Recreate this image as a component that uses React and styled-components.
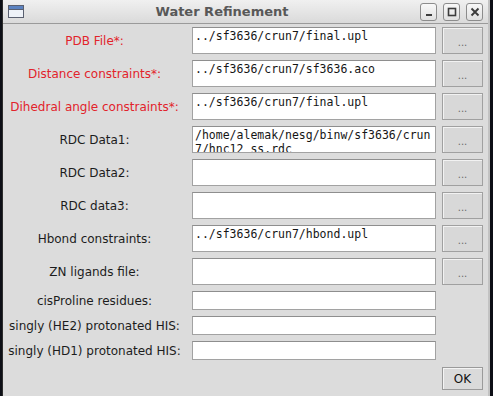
import React from "react";
import styled, { createGlobalStyle } from "styled-components";

const GlobalStyle = createGlobalStyle`
  body {
    margin: 0;
    background: #0d0f16;
    overflow: hidden;
  }
`;

const rows = [
  { label: "PDB File*:", required: true, value: "../sf3636/crun7/final.upl", browse: true },
  { label: "Distance constraints*:", required: true, value: "../sf3636/crun7/sf3636.aco", browse: true },
  { label: "Dihedral angle constraints*:", required: true, value: "../sf3636/crun7/final.upl", browse: true },
  { label: "RDC Data1:", value: "/home/alemak/nesg/binw/sf3636/crun7/hnc12_ss.rdc", browse: true },
  { label: "RDC Data2:", value: "", browse: true },
  { label: "RDC data3:", value: "", browse: true },
  { label: "Hbond constraints:", value: "../sf3636/crun7/hbond.upl", browse: true },
  { label: "ZN ligands file:", value: "", browse: true },
  { label: "cisProline residues:", value: "" },
  { label: "singly (HE2) protonated HIS:", value: "" },
  { label: "singly (HD1) protonated HIS:", value: "" },
];

function WindowIcon() {
  return (
    <svg width="16" height="13" viewBox="0 0 16 13">
      <rect x="0.5" y="0.5" width="15" height="12" fill="#eef2f8" stroke="#5a6070" />
      <rect x="1" y="1" width="14" height="3" fill="#5b82c0" />
      <line x1="1" y1="4.5" x2="15" y2="4.5" stroke="#5a6070" />
    </svg>
  );
}

function Window() {
  return (
    <Frame>
      <TitleBar>
        <WindowIcon />
        <Title>Water Refinement</Title>
        <Controls>
          <Ctrl>
            <svg width="10" height="10" viewBox="0 0 10 10">
              <rect x="2" y="7" width="6" height="2" fill="#3c3c3c" />
            </svg>
          </Ctrl>
          <Ctrl>
            <svg width="10" height="10" viewBox="0 0 10 10">
              <rect x="1.5" y="1.5" width="7" height="7" fill="none" stroke="#3c3c3c" strokeWidth="1.6" />
            </svg>
          </Ctrl>
          <Ctrl>
            <svg width="10" height="10" viewBox="0 0 10 10">
              <path d="M1.5 1.5 L8.5 8.5 M8.5 1.5 L1.5 8.5" stroke="#3c3c3c" strokeWidth="1.9" />
            </svg>
          </Ctrl>
        </Controls>
      </TitleBar>

      <Form>
        {rows.map((r) => (
          <Row key={r.label} $tall={r.browse}>
            <Label $required={r.required}>{r.label}</Label>
            <Field>{r.value}</Field>
            {r.browse && <Browse>...</Browse>}
          </Row>
        ))}
        <Footer>
          <OkButton>OK</OkButton>
        </Footer>
      </Form>
    </Frame>
  );
}

export default function App() {
  return (
    <>
      <GlobalStyle />
      <Window />
    </>
  );
}

const Frame = styled.div`
  margin-left: 2px;
  width: 488px;
  height: 396px;
  box-sizing: border-box;
  background: #dcdcdc;
  border-left: 1px solid #2c2c2c;
  border-right: 2px solid #c2c2c2;
  font-family: "DejaVu Sans", sans-serif;
`;

const TitleBar = styled.div`
  height: 23px;
  display: flex;
  align-items: center;
  padding-left: 5px;
  padding-right: 5px;
  background: linear-gradient(#f0f0f0, #dadada);
  border-bottom: 1px solid #9a9a9a;

  svg {
    display: block;
  }
`;

const Title = styled.div`
  flex: 1;
  text-align: center;
  font-weight: bold;
  font-size: 13px;
  color: #585858;
`;

const Controls = styled.div`
  display: flex;
  gap: 6px;
`;

const Ctrl = styled.div`
  width: 15px;
  height: 16px;
  border: 1px solid #8c8c8c;
  border-radius: 3px;
  background: linear-gradient(#f8f8f8, #e0e0e0);
  display: flex;
  align-items: center;
  justify-content: center;
`;

const Form = styled.div`
  display: flex;
  flex-direction: column;
  gap: 6px;
  padding-top: 3px;
`;

const Row = styled.div`
  display: grid;
  grid-template-columns: 183px 244px 41px;
  column-gap: 6px;
  align-items: center;
  height: ${({ $tall }) => ($tall ? "27px" : "19px")};
`;

const Label = styled.div`
  text-align: center;
  font-size: 12px;
  white-space: nowrap;
  color: ${({ $required }) => ($required ? "#e2232b" : "#1c1c1c")};
`;

const Field = styled.div`
  height: 100%;
  box-sizing: border-box;
  background: #fff;
  border: 1px solid #a2a2a2;
  border-top-color: #8e8e8e;
  padding: 1px 2px 0 2px;
  font-family: "DejaVu Sans Mono", monospace;
  font-size: 11.5px;
  line-height: 14px;
  color: #151515;
  white-space: pre-wrap;
  word-break: break-all;
  overflow: hidden;
`;

const Browse = styled.div`
  height: 100%;
  box-sizing: border-box;
  border: 1px solid #a0a0a0;
  background: #d8d8d8;
  box-shadow: inset 1px 1px 0 #f2f2f2;
  display: flex;
  align-items: center;
  justify-content: center;
  padding-top: 3px;
  font-size: 10px;
  color: #6a6a6a;
`;

const Footer = styled.div`
  display: grid;
  grid-template-columns: 183px 244px 41px;
  column-gap: 6px;
  margin-top: 1px;
`;

const OkButton = styled.div`
  grid-column: 3;
  height: 23px;
  box-sizing: border-box;
  border: 1px solid #9a9a9a;
  background: #dadada;
  box-shadow: inset 1px 1px 0 #f4f4f4;
  display: flex;
  align-items: center;
  justify-content: center;
  font-size: 12px;
  color: #111;
`;
